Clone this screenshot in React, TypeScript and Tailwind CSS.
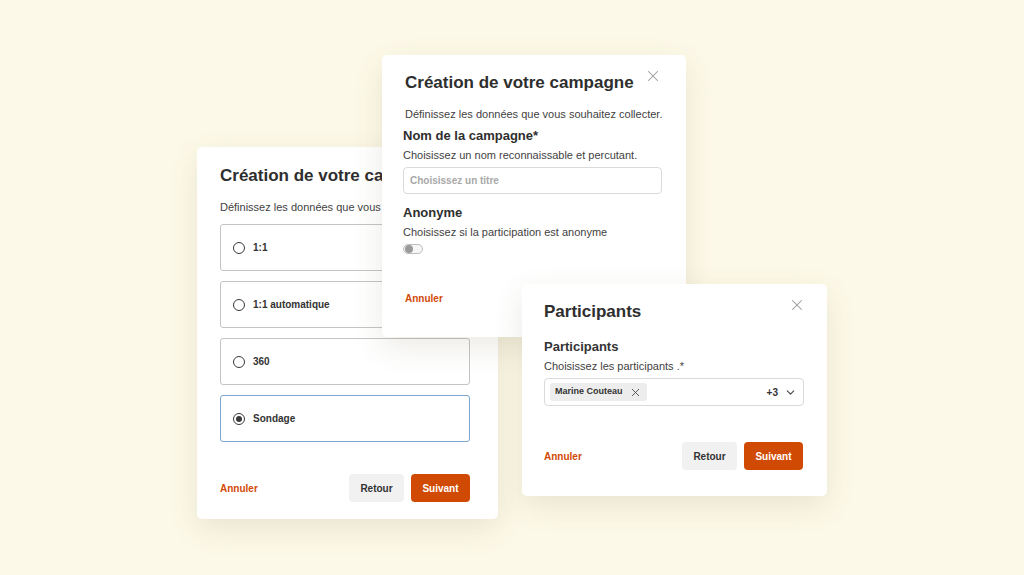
import { X, ChevronDown } from "lucide-react";

const font = { fontFamily: '"Liberation Sans", Arial, sans-serif' };

const Radio = ({ checked }: { checked?: boolean }) => (
  <span className="flex h-[12px] w-[12px] items-center justify-center rounded-full border-[1.5px] border-[#3a3a3a]">
    {checked && <span className="h-[6px] w-[6px] rounded-full bg-[#3a3a3a]" />}
  </span>
);

const Option = ({ label, checked }: { label: string; checked?: boolean }) => (
  <div
    className={`flex h-[47px] items-center gap-[8px] rounded-[3px] border bg-white pl-[12px] ${
      checked ? "border-[#7ea7cf]" : "border-[#c4c4c4]"
    }`}
  >
    <Radio checked={checked} />
    <span className="text-[10px] font-bold text-[#333]">{label}</span>
  </div>
);

const Footer = () => (
  <div className="flex items-center justify-between">
    <button className="text-[10px] font-bold text-[#d24a06]">Annuler</button>
    <div className="flex gap-[7px]">
      <button className="h-[28px] w-[55px] rounded-[4px] bg-[#f1f1f1] text-[10px] font-bold text-[#333]">
        Retour
      </button>
      <button className="h-[28px] w-[59px] rounded-[4px] bg-[#d14a03] text-[10px] font-bold text-white">
        Suivant
      </button>
    </div>
  </div>
);

const TypeCard = () => (
  <div className="absolute left-[197px] top-[147px] w-[301px] overflow-hidden rounded-[5px] bg-white pb-[17px] pl-[23px] pr-[28px] pt-[18px] shadow-[0_10px_30px_rgba(90,80,40,0.12)]">
    <h2 className="whitespace-nowrap text-[17px] font-bold leading-[22px] text-[#2e2e2e]">
      Création de votre campagne
    </h2>
    <p className="mt-[13px] whitespace-nowrap text-[11px] leading-[14px] text-[#3f3f3f]">
      Définissez les données que vous souhaitez collecter.
    </p>
    <div className="mt-[10px] flex flex-col gap-[10px]">
      <Option label="1:1" />
      <Option label="1:1 automatique" />
      <Option label="360" />
      <Option label="Sondage" checked />
    </div>
    <div className="mt-[32px]">
      <Footer />
    </div>
  </div>
);

const NameCard = () => (
  <div className="absolute left-[382px] top-[55px] h-[282px] w-[304px] rounded-[5px] bg-white pl-[21px] pt-[17px] shadow-[0_10px_30px_rgba(90,80,40,0.12)]">
    <X className="absolute right-[24px] top-[12px] h-[18px] w-[18px] text-[#9a9a9a]" strokeWidth={1.4} />
    <h2 className="pl-[2px] text-[17px] font-bold leading-[22px] text-[#2e2e2e]">
      Création de votre campagne
    </h2>
    <p className="mt-[13px] pl-[2px] text-[11px] leading-[14px] text-[#3f3f3f]">
      Définissez les données que vous souhaitez collecter.
    </p>
    <h3 className="mt-[7px] text-[13px] font-bold leading-[16px] text-[#2e2e2e]">
      Nom de la campagne*
    </h3>
    <p className="mt-[4px] text-[11px] leading-[14px] text-[#3f3f3f]">
      Choisissez un nom reconnaissable et percutant.
    </p>
    <div className="mt-[5px] flex h-[27px] w-[259px] items-center rounded-[4px] border border-[#dadada] pl-[6px] text-[10px] font-bold text-[#a8a8a8]">
      Choisissez un titre
    </div>
    <h3 className="mt-[11px] text-[13px] font-bold leading-[16px] text-[#2e2e2e]">Anonyme</h3>
    <p className="mt-[4px] text-[11px] leading-[14px] text-[#3f3f3f]">
      Choisissez si la participation est anonyme
    </p>
    <div className="mt-[5px] flex h-[10px] w-[20px] items-center rounded-full border border-[#bdbdbd] bg-[#f6f6f6] pl-[1px]">
      <span className="h-[8px] w-[8px] rounded-full bg-[#9a9a9a]" />
    </div>
    <button className="mt-[38px] pl-[2px] text-[10px] font-bold leading-[14px] text-[#d24a06]">
      Annuler
    </button>
  </div>
);

const ParticipantsCard = () => (
  <div className="absolute left-[522px] top-[284px] w-[305px] rounded-[5px] bg-white pb-[26px] pl-[22px] pr-[24px] pt-[17px] shadow-[0_10px_30px_rgba(90,80,40,0.12)]">
    <X className="absolute right-[21px] top-[12px] h-[18px] w-[18px] text-[#9a9a9a]" strokeWidth={1.4} />
    <h2 className="text-[17px] font-bold leading-[22px] text-[#2e2e2e]">Participants</h2>
    <h3 className="mt-[16px] text-[13px] font-bold leading-[16px] text-[#333]">Participants</h3>
    <p className="mt-[4px] text-[11px] leading-[14px] text-[#3f3f3f]">
      Choisissez les participants .*
    </p>
    <div className="mt-[5px] flex h-[28px] w-[260px] items-center justify-between rounded-[4px] border border-[#dadada] pl-[5px] pr-[6px]">
      <span className="flex h-[18px] items-center gap-[6px] rounded-[3px] bg-[#ededed] pl-[5px] pr-[5px] text-[9px] font-bold text-[#333]">
        Marine Couteau
        <X className="h-[13px] w-[13px] text-[#444]" strokeWidth={1.6} />
      </span>
      <span className="flex items-center gap-[6px] text-[10px] font-bold text-[#333]">
        +3
        <ChevronDown className="h-[13px] w-[13px] text-[#444]" strokeWidth={2} />
      </span>
    </div>
    <div className="mt-[36px]">
      <Footer />
    </div>
  </div>
);

export default function App() {
  return (
    <div className="relative h-[575px] w-[1024px] overflow-hidden bg-[#fdf9e8]" style={font}>
      <TypeCard />
      <NameCard />
      <ParticipantsCard />
    </div>
  );
}
